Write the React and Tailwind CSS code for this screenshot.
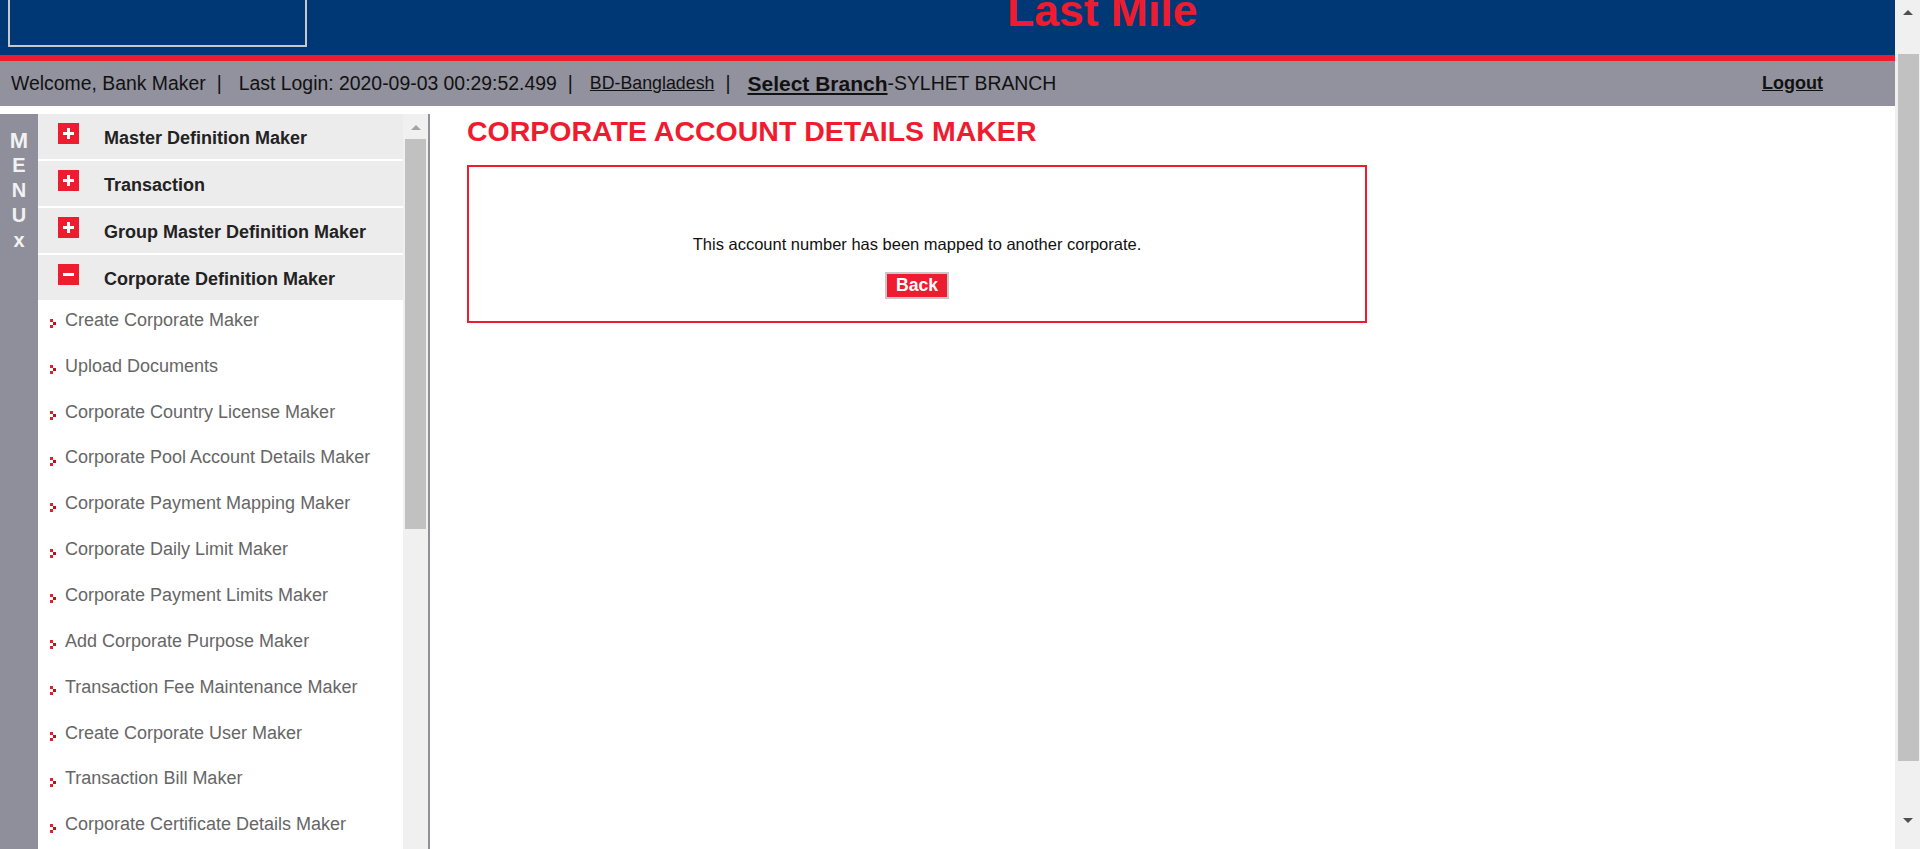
import React from "react";

const groups = [
  { label: "Master Definition Maker", open: false },
  { label: "Transaction", open: false },
  { label: "Group Master Definition Maker", open: false },
  { label: "Corporate Definition Maker", open: true },
];

const items = [
  "Create Corporate Maker",
  "Upload Documents",
  "Corporate Country License Maker",
  "Corporate Pool Account Details Maker",
  "Corporate Payment Mapping Maker",
  "Corporate Daily Limit Maker",
  "Corporate Payment Limits Maker",
  "Add Corporate Purpose Maker",
  "Transaction Fee Maintenance Maker",
  "Create Corporate User Maker",
  "Transaction Bill Maker",
  "Corporate Certificate Details Maker",
];

function ToggleIcon({ open }) {
  return (
    <span className="mt-[9px] flex h-[21px] w-[21px] shrink-0 items-center justify-center self-start bg-[#ee1c2e]">
      <svg width="11" height="11" viewBox="0 0 11 11">
        <rect x="0" y="4" width="11" height="3" fill="#fff" />
        {!open && <rect x="4" y="0" width="3" height="11" fill="#fff" />}
      </svg>
    </span>
  );
}

function Bullet() {
  return (
    <svg width="6" height="9" viewBox="0 0 6 9" className="mt-[7px] shrink-0">
      <rect x="0" y="0" width="3" height="3" fill="#e0202e" />
      <rect x="3" y="3" width="3" height="3" fill="#b8101c" />
      <rect x="0" y="6" width="3" height="3" fill="#e0202e" />
    </svg>
  );
}

function Pipe() {
  return <span className="ml-[11px] mr-[17px]">|</span>;
}

export default function App() {
  return (
    <div className="flex h-[849px] w-[1920px] overflow-hidden bg-white font-['Liberation_Sans',Arial,sans-serif]">
      <div className="flex min-w-0 flex-1 flex-col">
        {/* Top blue header */}
        <div className="flex h-[55px] shrink-0 overflow-hidden bg-[#003876]">
          <div className="-mt-[2px] ml-[8px] h-[49px] w-[299px] shrink-0 border-2 border-[#c8c8c8]" />
          <div className="-mt-[11px] ml-[700px] whitespace-nowrap text-[44.5px] font-bold leading-[44px] text-[#ee1c2e]">
            Last Mile
          </div>
        </div>
        <div className="h-[6px] shrink-0 bg-[#ee1c2e]" />
        {/* Info bar */}
        <div className="flex h-[45px] shrink-0 items-center whitespace-nowrap bg-[#92919e] pl-[11px] text-[19.4px] text-[#111]">
          <span>Welcome, Bank Maker</span>
          <Pipe />
          <span>Last Login: 2020-09-03 00:29:52.499</span>
          <Pipe />
          <span className="text-[17.8px] underline">BD-Bangladesh</span>
          <Pipe />
          <span className="text-[21px] font-bold underline">Select Branch</span>
          <span>-SYLHET BRANCH</span>
          <span className="ml-auto mr-[72px] text-[18px] font-bold underline">Logout</span>
        </div>
        <div className="h-[8px] shrink-0" />
        {/* Body */}
        <div className="flex min-h-0 flex-1">
          {/* MENU strip */}
          <div className="flex w-[38px] shrink-0 flex-col items-center bg-[#8f8e9b] pt-[14px] text-[20px] font-bold leading-[25px] text-[#f2f2f2]">
            <span className="text-[22px]">M</span>
            <span>E</span>
            <span>N</span>
            <span>U</span>
            <span className="font-extrabold">x</span>
          </div>
          {/* Sidebar menu */}
          <div className="flex w-[365px] shrink-0 flex-col overflow-hidden bg-white">
            {groups.map((g) => (
              <div
                key={g.label}
                className="mb-[2px] flex h-[45px] shrink-0 items-center bg-[#ececec] pl-[20px]"
              >
                <ToggleIcon open={g.open} />
                <span className="ml-[25px] mt-[3px] whitespace-nowrap text-[18px] font-bold text-[#222]">
                  {g.label}
                </span>
              </div>
            ))}
            <div className="-mt-[1.5px] flex flex-col">
              {items.map((it) => (
                <div
                  key={it}
                  className="flex h-[45.85px] shrink-0 items-center pb-[6px] pl-[12px]"
                >
                  <Bullet />
                  <span className="ml-[9px] whitespace-nowrap text-[18px] text-[#666]">{it}</span>
                </div>
              ))}
            </div>
          </div>
          {/* Sidebar scrollbar */}
          <div className="flex w-[25px] shrink-0 flex-col items-center bg-[#f0f0f0]">
            <svg width="10" height="5" viewBox="0 0 10 5" className="mt-[11px]">
              <path d="M0 5 L5 0 L10 5 Z" fill="#a3a3a3" />
            </svg>
            <div className="mt-[9px] h-[390px] w-[21px] bg-[#c1c1c1]" />
          </div>
          <div className="w-[2px] shrink-0 bg-[#8e8e9c]" />
          {/* Main */}
          <div className="min-w-0 flex-1 pl-[37px]">
            <h1 className="mt-[1px] whitespace-nowrap text-[28.5px] font-bold leading-[32px] text-[#ee1c2e]">
              CORPORATE ACCOUNT DETAILS MAKER
            </h1>
            <div className="mt-[18px] flex h-[158px] w-[900px] flex-col items-center border-2 border-[#ee1c2e] pt-[67px]">
              <p className="whitespace-nowrap text-[16.5px] leading-[20px] text-[#111]">
                This account number has been mapped to another corporate.
              </p>
              <button className="mt-[18px] flex h-[27px] w-[64px] items-center justify-center border-2 border-[#c8c8c8] bg-[#ee1c2e] text-[17.6px] font-bold leading-none text-white">
                Back
              </button>
            </div>
          </div>
        </div>
      </div>
      {/* Page scrollbar */}
      <div className="flex w-[25px] shrink-0 flex-col items-center bg-[#f0f0f0]">
        <svg width="10" height="5" viewBox="0 0 10 5" className="mt-[10px]">
          <path d="M0 5 L5 0 L10 5 Z" fill="#505050" />
        </svg>
        <div className="ml-[2px] mt-[39px] h-[707px] w-[21px] bg-[#c1c1c1]" />
        <div className="flex-1" />
        <svg width="10" height="5" viewBox="0 0 10 5" className="mb-[26px]">
          <path d="M0 0 L10 0 L5 5 Z" fill="#505050" />
        </svg>
      </div>
    </div>
  );
}
